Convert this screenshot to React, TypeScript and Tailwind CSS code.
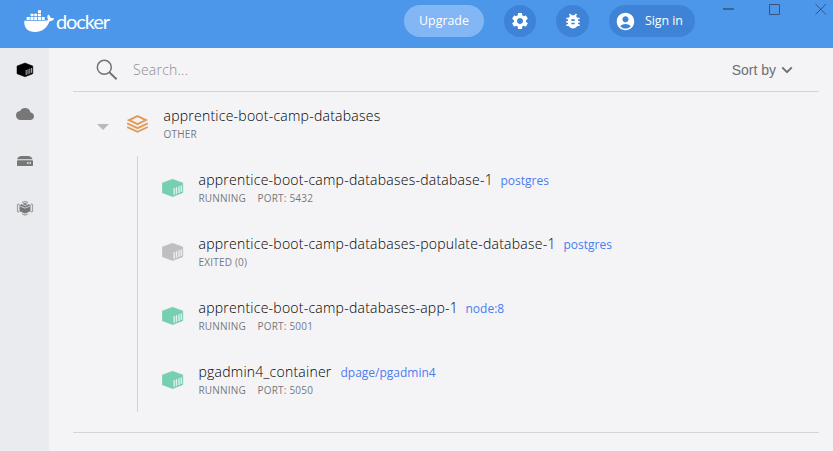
import React from "react";
import { MdSettings, MdBugReport, MdAccountCircle, MdCloud } from "react-icons/md";

function Whale() {
  return (
    <svg width="31" height="22" viewBox="0 0 31 22" fill="#fff" className="shrink-0">
      <path d="M14 0.2h3v2.800h-3zM6.500 3.700h3v2.600h-3zM10.200 3.700h3v2.600h-3zM14 3.700h3v2.600h-3zM2.600 7h3.200v2.900H2.600zM6.500 7h3v2.900h-3zM10.200 7h3v2.900h-3zM14 7h3v2.900h-3zM17.700 7h3v2.900h-3z" />
      <path d="M0.300 10.700H21c1.400 0 2.600-.3 3.300-.9-1.300-1.700-1.300-3.500-.2-5.300 1.500.9 2.400 2.200 2.600 3.600 1.300-.3 2.500-.1 3.500.5-.8 1.900-2.600 2.800-4.700 2.700C22.900 18.300 17.800 22 11 22 3.800 22-.3 18.200.3 10.700z" />
    </svg>
  );
}

function ContainerIcon({ color, stripe }: { color: string; stripe: string }) {
  return (
    <svg width="22" height="20" viewBox="0 0 22 20" className="shrink-0">
      <path d="M10.500 1.300 20.700 5v9.700L10.500 18.500 0.400 14.700V5z" fill={color} stroke={color} strokeWidth="0.700" strokeLinejoin="round" />
      <path d="M12.200 10v6.700M14.500 9.200v6.600M17 8.300v6.700M19.200 7.500v6.600" stroke={stripe} strokeWidth="1.300" />
    </svg>
  );
}

function StackIcon() {
  return (
    <svg width="22" height="20" viewBox="0 0 22 20" fill="none" stroke="#e09a5a" strokeWidth="1.900" className="shrink-0">
      <path d="M10.500 2.100 18.900 6.100 10.500 10.100 2.100 6.100z" />
      <path d="M0.200 9.300 10.500 14.100l10.300-4.800M0.200 13 10.500 17.800l10.300-4.800" />
    </svg>
  );
}

function Sidebar() {
  return (
    <nav className="flex w-[49px] shrink-0 flex-col items-center bg-[#e9ebef]">
      <svg width="18" height="16" viewBox="0 0 18 16" className="mt-[14px]">
        <path d="M9 1 16.800 4v7.700L9 14.800 1 11.700V4z" fill="#000" stroke="#000" strokeWidth=".5" strokeLinejoin="round" />
        <path d="M10.200 8v5M12 7.300v5M13.800 6.600v5M15.600 6v4.800" stroke="#c5c5c5" strokeWidth=".9" />
      </svg>
      <MdCloud className="mt-[27px] h-[18px] w-[18px] text-[#777]" />
      <svg width="18" height="14" viewBox="0 0 18 14" className="mt-[32px]">
        <path d="M5.500 1h6.500c2 0 3.700 1.200 4.600 3.200H1C2 2.200 3.500 1 5.500 1z" fill="#777" />
        <path d="M1.500 5.200h15l.5.500v4.800l-.5.500h-15l-.5-.5V5.700z" fill="#777" />
        <path d="M11 8h1.700M13.500 8h1.500" stroke="#eee" strokeWidth="1.300" />
      </svg>
      <svg width="18" height="16" viewBox="0 0 18 16" className="mt-[31px]" fill="none">
        <path d="M3.500 5 9 2.900 14.500 5v6.200L9 13.500l-5.500-2.300z" fill="#777" />
        <path d="M4 6.100 9 8.100l5-2M6 4.300 9 5.500l3-1.200" stroke="#d5d6d8" strokeWidth=".9" />
        <path d="M6 2.600 9 1.400l3 1.200M3.200 3.900 1.500 4.800v6.500l1.700.9M14.800 3.900l1.700.9v6.500l-1.700.9M6 13.800 9 15l3-1.200" stroke="#a0a1a3" strokeWidth="1.200" />
      </svg>
    </nav>
  );
}

const containers = [
  { name: "apprentice-boot-camp-databases-database-1", image: "postgres", status: "RUNNING", port: "PORT: 5432", nameWidth: "w-[294px]" },
  { name: "apprentice-boot-camp-databases-populate-database-1", image: "postgres", status: "EXITED (0)", port: "", nameWidth: "w-[357px]" },
  { name: "apprentice-boot-camp-databases-app-1", image: "node:8", status: "RUNNING", port: "PORT: 5001", nameWidth: "w-[259px]" },
  { name: "pgadmin4_container", image: "dpage/pgadmin4", status: "RUNNING", port: "PORT: 5050", nameWidth: "w-[134px]" },
];

export default function App() {
  return (
    <div className="flex h-[451px] w-[833px] flex-col overflow-hidden bg-[#f4f4f6] font-['Open_Sans','Noto_Sans',sans-serif]">
      <header className="flex h-12 shrink-0 bg-[#4c97ea] text-white">
        <div className="flex w-[404px] pl-6 pt-[10px]">
          <Whale />
          <span className="ml-px font-['Lato',sans-serif] text-[20px] font-normal leading-[22px] tracking-[-1.100px]">docker</span>
        </div>
        <div className="flex h-8 pt-[5px] text-[12.400px]">
          <button className="h-8 w-20 rounded-full bg-[#82b6f5] pt-px">Upgrade</button>
          <button className="ml-5 flex h-8 w-8 items-center justify-center rounded-full bg-[#3f83d6]"><MdSettings size={20} /></button>
          <button className="ml-5 flex h-8 w-[33px] items-center justify-center rounded-full bg-[#3f83d6]"><MdBugReport size={20} /></button>
          <button className="ml-5 flex h-8 w-[86px] items-center rounded-full bg-[#3f83d6] pl-[6px]"><MdAccountCircle size={21} /><span className="ml-[9px] whitespace-nowrap pt-px tracking-[-0.050px]">Sign in</span></button>
        </div>
        <svg width="104" height="16" viewBox="0 0 104 16" className="ml-[28px] mt-[1px]" fill="none" stroke="#385477">
          <path d="M0 8h11" strokeWidth="1.500" />
          <path d="M46.500 3.500h10v10h-10z" />
          <path d="m92.500 3 10.500 10.500M103 3 92.500 13.500" />
        </svg>
      </header>
      <div className="flex min-h-0 flex-1">
        <Sidebar />
        <main className="ml-6 flex w-[746px] flex-col">
          <div className="flex h-11 items-center border-b border-[#d3d4d8]">
            <svg width="22" height="22" viewBox="0 0 22 22" className="ml-[23px]" fill="none" stroke="#6f7478" strokeWidth="1.500">
              <circle cx="8.300" cy="8.300" r="7" /><path d="m13.300 13.300 7.300 7" strokeWidth="1.900" />
            </svg>
            <span className="ml-[15px] text-[14px] font-light tracking-[0.240px] text-[#8c8c90]">Search...</span>
            <span className="ml-auto pt-px font-['Liberation_Sans',Arial,sans-serif] text-[14px] text-[#6c7074]">Sort by</span>
            <svg width="12" height="8" viewBox="0 0 12 8" className="ml-[5px] mr-[26px]" fill="none" stroke="#6c7074" strokeWidth="1.900"><path d="m1.200 1.300 4.800 4.800 4.800-4.800" /></svg>
          </div>
          <section className="h-[341px] border-b border-[#d3d4d8]">
            <div className="flex h-16 items-center">
              <svg width="12" height="6" viewBox="0 0 12 6" className="ml-6 mt-[6px]"><path d="M0 0h12L6 6z" fill="#b9b9bb" /></svg>
              <div className="ml-[18px]"><StackIcon /></div>
              <div className="ml-[14.500px]">
                <div className="w-[218px] whitespace-nowrap text-[14px] font-light leading-5 tracking-[0.240px] text-black">apprentice-boot-camp-databases</div>
                <div className="text-[10px] leading-4 tracking-[0.200px] text-[#747981]">OTHER</div>
              </div>
            </div>
            <div className="ml-16 h-64 border-l border-[#d0d1d5]">
              {containers.map((c) => (
                <div key={c.name} className="flex h-16 items-center pl-6">
                  <ContainerIcon color={c.port ? "#76cfb1" : "#bfbfc1"} stripe={c.port ? "#e0f5ee" : "#f0f0f2"} />
                  <div className="ml-[14.500px] pb-px">
                    <div className="flex items-baseline whitespace-nowrap leading-5">
                      <span className={`${c.nameWidth} text-[14px] font-light tracking-[0.240px] text-black`}>{c.name}</span>
                      <span className="ml-[8px] text-[12px] text-[#4a7df0]">{c.image}</span>
                    </div>
                    <div className="flex gap-[11.500px] text-[10px] leading-[15px] tracking-[0.200px] text-[#747981]"><span>{c.status}</span>{c.port && <span>{c.port}</span>}</div>
                  </div>
                </div>
              ))}
            </div>
          </section>
        </main>
      </div>
    </div>
  );
}
